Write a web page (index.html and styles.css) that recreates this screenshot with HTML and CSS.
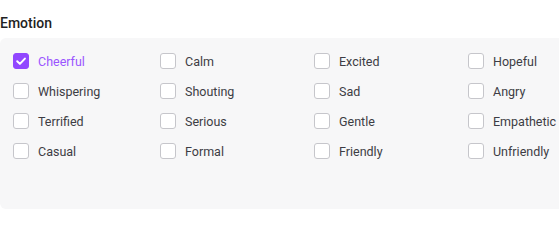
FILE: index.html
```html
<!DOCTYPE html>
<html lang="en">
<head>
<meta charset="utf-8">
<link rel="stylesheet" href="styles.css">
</head>
<body>
<section class="field">
  <h2 class="field-title">Emotion</h2>
  <div class="panel">
    <div class="grid">
      <label class="opt checked"><span class="box"><svg viewBox="0 0 16 16" width="16" height="16"><path d="M4.2 8.3 L6.9 10.9 L11.9 5.6" fill="none" stroke="#fff" stroke-width="2" stroke-linecap="round" stroke-linejoin="round"/></svg></span><span class="txt">Cheerful</span></label>
      <label class="opt"><span class="box"></span><span class="txt">Calm</span></label>
      <label class="opt"><span class="box"></span><span class="txt">Excited</span></label>
      <label class="opt"><span class="box"></span><span class="txt">Hopeful</span></label>
      <label class="opt"><span class="box"></span><span class="txt">Whispering</span></label>
      <label class="opt"><span class="box"></span><span class="txt">Shouting</span></label>
      <label class="opt"><span class="box"></span><span class="txt">Sad</span></label>
      <label class="opt"><span class="box"></span><span class="txt">Angry</span></label>
      <label class="opt"><span class="box"></span><span class="txt">Terrified</span></label>
      <label class="opt"><span class="box"></span><span class="txt">Serious</span></label>
      <label class="opt"><span class="box"></span><span class="txt">Gentle</span></label>
      <label class="opt"><span class="box"></span><span class="txt">Empathetic</span></label>
      <label class="opt"><span class="box"></span><span class="txt">Casual</span></label>
      <label class="opt"><span class="box"></span><span class="txt">Formal</span></label>
      <label class="opt"><span class="box"></span><span class="txt">Friendly</span></label>
      <label class="opt"><span class="box"></span><span class="txt">Unfriendly</span></label>
    </div>
  </div>
</section>
</body>
</html>
```
FILE: styles.css
```css
html, body {
  margin: 0;
  padding: 0;
  background: #ffffff;
  overflow: hidden;
}
body {
  font-family: Roboto, "Liberation Sans", sans-serif;
  width: 559px;
  height: 210px;
}
.field {
  padding-top: 13px;
}
.field-title {
  margin: 0 0 5px 0;
  font-size: 14px;
  line-height: 20px;
  font-weight: 500;
  color: #1f1f23;
}
.panel {
  background: #f7f7f8;
  border-radius: 6px;
  margin-right: -12px;
  height: 171px;
  box-sizing: border-box;
  padding: 15px 0 0 13px;
}
.grid {
  display: grid;
  grid-template-columns: 147px 154px 154px 1fr;
  row-gap: 14px;
}
.opt {
  display: flex;
  align-items: center;
  gap: 9px;
  height: 16px;
  font-size: 12.5px;
  color: #3d3d44;
  white-space: nowrap;
}
.box {
  flex: none;
  width: 16px;
  height: 16px;
  box-sizing: border-box;
  border: 1.5px solid #c6c6cb;
  border-radius: 3px;
  background: #ffffff;
  display: flex;
}
.checked .box {
  background: #9147ff;
  border-color: #9147ff;
}
.checked .box svg {
  margin: -1.5px;
}
.checked .txt {
  color: #9a55ff;
}
```
